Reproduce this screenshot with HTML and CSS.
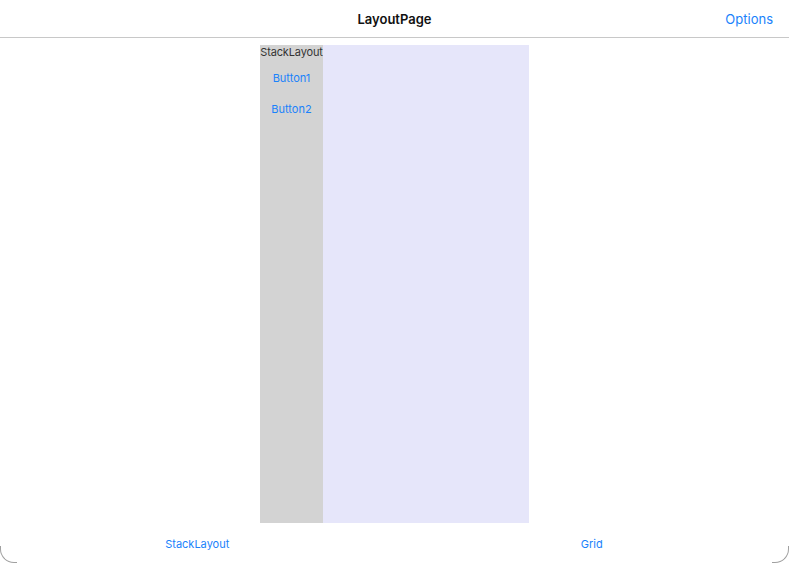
FILE: index.html
```html
<!DOCTYPE html>
<html>
<head>
<meta charset="utf-8">
<link rel="stylesheet" href="styles.css">
</head>
<body>
<div class="app">
  <header class="navbar">
    <div class="nav-side"></div>
    <div class="nav-title">LayoutPage</div>
    <div class="nav-side nav-right"><span class="nav-action">Options</span></div>
  </header>
  <main class="content">
    <div class="box">
      <div class="stack">
        <div class="stack-label">StackLayout</div>
        <div class="stack-btn">Button1</div>
        <div class="stack-btn">Button2</div>
      </div>
      <div class="fill"></div>
    </div>
  </main>
  <nav class="tabbar">
    <div class="tab">StackLayout</div>
    <div class="tab">Grid</div>
  </nav>
  <div class="corner corner-left"></div>
  <div class="corner corner-right"></div>
</div>
</body>
</html>
```

FILE: styles.css
```css
html, body {
  margin: 0;
  padding: 0;
  background: #ffffff;
}
body {
  font-family: Inter, "Open Sans", "Liberation Sans", sans-serif;
}
.app {
  position: relative;
  width: 789px;
  height: 563px;
  display: flex;
  flex-direction: column;
  overflow: hidden;
}
.navbar {
  height: 37px;
  flex: none;
  border-bottom: 1px solid #c8c8c8;
  display: grid;
  grid-template-columns: 1fr auto 1fr;
  align-items: center;
}
.nav-title {
  font-size: 13px;
  font-weight: 600;
  color: #111;
}
.nav-right {
  display: flex;
  justify-content: flex-end;
  padding-right: 16px;
}
.nav-action {
  font-size: 13px;
  color: #1a82fb;
}
.content {
  flex: 1;
  display: flex;
  justify-content: center;
  padding-top: 7px;
}
.box {
  width: 269px;
  height: 478px;
  display: flex;
}
.stack {
  width: 63px;
  background: #d3d3d3;
  display: flex;
  flex-direction: column;
  align-items: center;
}
.stack-label {
  font-size: 11px;
  color: #333;
  line-height: 14px;
  white-space: nowrap;
  letter-spacing: -0.15px;
}
.stack-btn {
  font-size: 11px;
  color: #1a82fb;
  height: 31px;
  line-height: 31px;
}
.stack-label + .stack-btn {
  margin-top: 4px;
}
.fill {
  flex: 1;
  background: #e6e6fa;
}
.tabbar {
  height: 40px;
  flex: none;
  display: grid;
  grid-template-columns: 1fr 1fr;
  align-items: center;
  padding-top: 2px;
  box-sizing: border-box;
}
.tab {
  text-align: center;
  font-size: 11px;
  color: #1a82fb;
}
.corner {
  position: absolute;
  bottom: 0;
  width: 16px;
  height: 16px;
  border-bottom: 1px solid #a0a0a0;
}
.corner-left {
  left: 0;
  border-left: 1px solid #a0a0a0;
  border-bottom-left-radius: 14px;
}
.corner-right {
  right: 0;
  border-right: 1px solid #a0a0a0;
  border-bottom-right-radius: 14px;
}
```
